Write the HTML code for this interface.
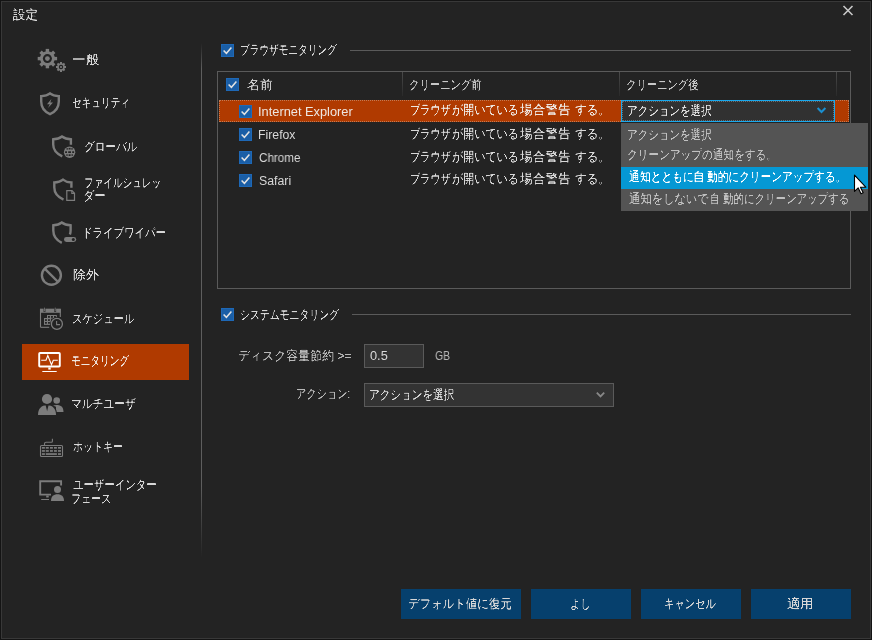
<!DOCTYPE html>
<html><head><meta charset="utf-8">
<style>
html,body{margin:0;padding:0;}
body{width:872px;height:640px;overflow:hidden;background:#141414;position:relative;font-family:"Liberation Sans",sans-serif;color:#d8d8d8;font-size:12px;}
.win{position:absolute;left:1px;top:1px;width:868px;height:636px;background:#232323;border:1px solid #383838;}
.t{position:absolute;white-space:nowrap;line-height:14px;transform-origin:0 0;will-change:transform;filter:url(#crisp);}
.ic{position:absolute;overflow:visible;}
.cb{position:absolute;width:13px;height:13px;}
.hl{position:absolute;height:1px;background:#5a5a5a;}
.btn{position:absolute;height:30px;background:#06406d;}
</style></head><body>
<svg width="0" height="0" style="position:absolute"><filter id="crisp"><feComponentTransfer><feFuncA type="linear" slope="2.5" intercept="-0.6"/></feComponentTransfer></filter></svg>
<div class="win"></div>

<!-- close X -->
<svg class="ic" style="left:842px;top:5px" width="12" height="11" viewBox="0 0 12 11"><path d="M1.5 1L10.5 10M10.5 1L1.5 10" stroke="#c8c8c8" stroke-width="1.6"/></svg>

<!-- sidebar icons -->
<svg class="ic" style="left:35px;top:45px" width="35" height="30" viewBox="0 0 35 30">
 <g fill="#7c7c7c">
  <g transform="translate(12.4 13.6)">
   <circle r="7.4"/>
   <rect x="-1.7" y="-9.7" width="3.4" height="19.4"/>
   <rect x="-1.7" y="-9.7" width="3.4" height="19.4" transform="rotate(45)"/>
   <rect x="-1.7" y="-9.7" width="3.4" height="19.4" transform="rotate(90)"/>
   <rect x="-1.7" y="-9.7" width="3.4" height="19.4" transform="rotate(135)"/>
  </g>
  <g transform="translate(26 22)">
   <circle r="3.8"/>
   <rect x="-1" y="-5" width="2" height="10"/>
   <rect x="-1" y="-5" width="2" height="10" transform="rotate(45)"/>
   <rect x="-1" y="-5" width="2" height="10" transform="rotate(90)"/>
   <rect x="-1" y="-5" width="2" height="10" transform="rotate(135)"/>
  </g>
 </g>
 <circle cx="12.4" cy="13.6" r="4.5" fill="#232323"/>
 <circle cx="12.4" cy="13.6" r="2.4" fill="#7c7c7c"/>
 <circle cx="26" cy="22" r="2.2" fill="#232323"/>
 <circle cx="26" cy="22" r="1.1" fill="#7c7c7c"/>
</svg>

<svg class="ic" style="left:35px;top:88px" width="30" height="30" viewBox="0 0 30 30">
 <path d="M15 5.3C12.6 7.3 9.2 8 6.2 8.1L6.2 13.5C6.2 19.5 9.6 23.8 15 26.1C20.4 23.8 23.8 19.5 23.8 13.5L23.8 8.1C20.8 8 17.4 7.3 15 5.3Z" fill="none" stroke="#7c7c7c" stroke-width="2.4" stroke-linejoin="miter"/>
 <path d="M16.4 11L12 16.2L14.8 16.2L13 20L18 14.6L15.3 14.6Z" fill="#7c7c7c"/>
</svg>

<svg class="ic" style="left:48px;top:132px" width="30" height="30" viewBox="0 0 30 30">
 <path d="M14.3 24.3C9.2 22 5.2 18.2 5.2 12.5L5.2 7.3C8.2 7.2 11.8 6.3 14 4.5C16.3 6.3 19.8 7.2 22.9 7.3L22.9 12.7" fill="none" stroke="#7c7c7c" stroke-width="2.4"/>
 <circle cx="21.6" cy="20.2" r="5.7" fill="#7c7c7c"/>
 <g fill="#232323">
  <rect x="18.5" y="16.2" width="1.4" height="1.4"/><rect x="20.6" y="15.9" width="2" height="1.6"/><rect x="23.3" y="16.2" width="1.4" height="1.4"/>
  <rect x="17.1" y="19.3" width="1.9" height="1.7"/><rect x="20.2" y="19.3" width="2.8" height="1.7"/><rect x="24.2" y="19.3" width="1.9" height="1.7"/>
  <rect x="18.3" y="22.3" width="1.4" height="1.5"/><rect x="20.6" y="22.3" width="2" height="1.7"/><rect x="23.5" y="22.3" width="1.4" height="1.5"/>
 </g>
</svg>

<svg class="ic" style="left:48px;top:175px" width="30" height="30" viewBox="0 0 30 30">
 <path d="M15.5 24.6C10.2 22.3 6.3 18.5 6.3 12.6L6.3 7.5C9.3 7.4 12.8 6.5 15 4.6C17.3 6.5 20.8 7.4 23.4 7.5L23.4 12.8" fill="none" stroke="#7c7c7c" stroke-width="2.4"/>
 <path d="M18.8 15.7L24 15.7L26.5 18.3L26.5 25.3L18.8 25.3Z" fill="none" stroke="#7c7c7c" stroke-width="1.2"/>
 <path d="M23.8 15.6L23.8 18.4L26.6 18.4" fill="none" stroke="#7c7c7c" stroke-width="1.1"/>
</svg>

<svg class="ic" style="left:48px;top:218px" width="30" height="30" viewBox="0 0 30 30">
 <path d="M13.8 24.8C8.8 22.4 5.3 18.5 5.3 12.5L5.3 7.3C8.3 7.2 11.6 6.3 13.8 4.5C16 6.3 19.4 7.2 22.6 7.3L22.6 12.6C22.6 13.8 22.4 15.2 21.9 16.5" fill="none" stroke="#7c7c7c" stroke-width="2.4"/>
 <rect x="16" y="19" width="12.2" height="4.9" rx="2.45" fill="#7c7c7c"/>
 <circle cx="25.3" cy="21.5" r="1.5" fill="#232323"/>
</svg>

<svg class="ic" style="left:36px;top:259px" width="32" height="32" viewBox="0 0 32 32">
 <circle cx="15.4" cy="16.3" r="9.5" fill="none" stroke="#7c7c7c" stroke-width="2.4"/>
 <path d="M8.7 9.6L22.1 23" stroke="#7c7c7c" stroke-width="2.4"/>
</svg>

<svg class="ic" style="left:36px;top:303px" width="30" height="30" viewBox="0 0 30 30">
 <path d="M4.5 24.3L4.5 6.4L24.3 6.4L24.3 14" fill="none" stroke="#7c7c7c" stroke-width="1.1"/>
 <path d="M4.5 24.3L13.2 24.3" fill="none" stroke="#7c7c7c" stroke-width="1.1"/>
 <rect x="4" y="5.9" width="20.8" height="3.9" fill="#7c7c7c"/>
 <rect x="7.6" y="4.6" width="1.8" height="4.4" fill="#232323"/>
 <rect x="18.3" y="4.6" width="1.8" height="4.4" fill="#232323"/>
 <rect x="8.1" y="4.6" width="0.8" height="3.8" fill="#7c7c7c"/>
 <rect x="18.8" y="4.6" width="0.8" height="3.8" fill="#7c7c7c"/>
 <rect x="11" y="12" width="9.8" height="3.6" fill="#7c7c7c"/>
 <rect x="8" y="15" width="7" height="6.9" fill="#7c7c7c"/>
 <g fill="#232323">
  <rect x="12" y="13" width="1.9" height="1.8"/><rect x="15" y="13" width="1.9" height="1.8"/><rect x="18" y="13" width="1.9" height="1.8"/>
  <rect x="9" y="16.2" width="1.9" height="1.7"/><rect x="12" y="16.2" width="1.9" height="1.7"/>
  <rect x="9" y="19" width="1.9" height="1.7"/><rect x="12" y="19" width="1.9" height="1.7"/>
 </g>
 <circle cx="20.9" cy="20.9" r="6.9" fill="#232323"/>
 <circle cx="20.9" cy="20.9" r="5.5" fill="none" stroke="#7c7c7c" stroke-width="1.3"/>
 <path d="M20.6 18.1L20.6 21.6L24 21.6" fill="none" stroke="#7c7c7c" stroke-width="1.1"/>
</svg>

<!-- selected item -->
<div style="position:absolute;left:22px;top:344px;width:167px;height:36px;background:#b03a00"></div>
<svg class="ic" style="left:34px;top:347px" width="32" height="32" viewBox="0 0 32 32">
 <rect x="5.2" y="6" width="20.6" height="13.5" rx="0.8" fill="none" stroke="#fff" stroke-width="1.9"/>
 <path d="M7.2 13.3L12 13.3L13.8 8.6L17.5 17.7L19.3 13.3L23.8 13.3" fill="none" stroke="#fff" stroke-width="1.1"/>
 <rect x="14.3" y="20.4" width="2.4" height="2.2" fill="#fff"/>
 <rect x="8.3" y="24" width="14.4" height="1" fill="#fff"/>
</svg>

<svg class="ic" style="left:34px;top:389px" width="32" height="32" viewBox="0 0 32 32">
 <circle cx="22.7" cy="11.5" r="3.3" fill="#7c7c7c"/>
 <path d="M19 16.4C21.5 15.6 25 15.6 27.3 17.3C28.8 18.4 29.5 20.6 29.5 23L22 23L22 17.8Z" fill="#7c7c7c"/>
 <circle cx="13" cy="10" r="6" fill="#232323"/>
 <circle cx="13" cy="10" r="5.1" fill="#7c7c7c"/>
 <path d="M2.8 27C2.8 18.5 7 15.3 13 15.3C19 15.3 23.2 18.5 23.2 27Z" fill="#232323"/>
 <path d="M4 26C4 19.3 7.5 16.2 13 16.2C18.5 16.2 22 19.3 22 26Z" fill="#7c7c7c"/>
 <path d="M11.6 16L14.6 16L13.1 22.2Z" fill="#232323"/>
 
</svg>

<svg class="ic" style="left:36px;top:433px" width="30" height="30" viewBox="0 0 30 30">
 <rect x="4.5" y="12.5" width="22" height="11" rx="1" fill="none" stroke="#7c7c7c" stroke-width="1.1"/>
 <path d="M8.5 12.5L8.5 10.8C8.5 9.9 9.1 9.2 10 9.2L15.4 9.2C16 9.2 16.4 8.8 16.4 8.2L16.4 5.8" fill="none" stroke="#7c7c7c" stroke-width="1.1"/>
 <g fill="#7c7c7c">
  <rect x="5.9" y="14" width="3" height="1.7"/><rect x="9.8" y="14" width="3" height="1.7"/><rect x="14" y="14" width="2.9" height="1.7"/><rect x="18" y="14" width="2.9" height="1.7"/><rect x="22" y="14" width="3" height="1.7"/>
  <rect x="5.9" y="17.1" width="3" height="1.7"/><rect x="9.8" y="17.1" width="3" height="1.7"/><rect x="14" y="17.1" width="2.9" height="1.7"/><rect x="18" y="17.1" width="2.9" height="1.7"/><rect x="22" y="17.1" width="3" height="1.7"/>
  <rect x="5.9" y="20.2" width="3" height="1.7"/><rect x="9.8" y="20.2" width="11.1" height="1.7"/><rect x="22" y="20.2" width="3" height="1.7"/>
 </g>
</svg>

<svg class="ic" style="left:35px;top:475px" width="32" height="32" viewBox="0 0 32 32">
 <path d="M16 19.6L5.2 19.6L5.2 6.2L26.1 6.2L26.1 10.5" fill="none" stroke="#7c7c7c" stroke-width="1.9"/>
 <rect x="11.2" y="20.5" width="2.5" height="2" fill="#7c7c7c"/>
 <rect x="6.2" y="24" width="7.8" height="1" fill="#7c7c7c"/>
 <circle cx="22.5" cy="14.5" r="3.5" fill="#7c7c7c"/>
 <path d="M16 26C16 21.3 18.6 19.3 22.5 19.3C26.4 19.3 29 21.3 29 26Z" fill="#7c7c7c"/>
</svg>

<!-- divider -->
<div style="position:absolute;left:201px;top:43px;width:1px;height:515px;background:linear-gradient(#232323,#5e5e5e 5%,#5e5e5e 86%,#232323)"></div>

<!-- browser monitoring group -->
<svg class="cb" style="left:221px;top:44px" width="13" height="13" viewBox="0 0 13 13"><rect x="0" y="0" width="13" height="13" fill="#1a5ea6"/><rect x="0.5" y="0.5" width="12" height="12" fill="none" stroke="#1e68b6" stroke-width="1"/><path d="M2.6 6.4L5.4 9.3L10.4 3.4" fill="none" stroke="#e2e2e2" stroke-width="1.5"/></svg>
<div class="hl" style="left:350px;top:50px;width:501px;"></div>

<!-- table -->
<div style="position:absolute;left:217px;top:71px;width:632px;height:216px;border:1px solid #5a5a5a;"></div>
<svg class="cb" style="left:226px;top:78px" width="13" height="13" viewBox="0 0 13 13"><rect x="0" y="0" width="13" height="13" fill="#1a5ea6"/><rect x="0.5" y="0.5" width="12" height="12" fill="none" stroke="#1e68b6" stroke-width="1"/><path d="M2.6 6.4L5.4 9.3L10.4 3.4" fill="none" stroke="#e2e2e2" stroke-width="1.5"/></svg>
<div style="position:absolute;left:402px;top:72px;width:1px;height:24px;background:linear-gradient(#4a4a4a,#2a2a2a)"></div>
<div style="position:absolute;left:619px;top:72px;width:1px;height:24px;background:linear-gradient(#4a4a4a,#2a2a2a)"></div>
<div style="position:absolute;left:836px;top:72px;width:1px;height:24px;background:linear-gradient(#4a4a4a,#2a2a2a)"></div>

<div style="position:absolute;left:219px;top:100px;width:630px;height:22px;background:#b03a00"></div>
<div style="position:absolute;left:219px;top:100px;width:628px;height:20px;border:1px dotted #c47a52"></div>
<svg class="cb" style="left:239px;top:105px" width="13" height="13" viewBox="0 0 13 13"><rect x="0" y="0" width="13" height="13" fill="#1a5ea6"/><rect x="0.5" y="0.5" width="12" height="12" fill="none" stroke="#1e68b6" stroke-width="1"/><path d="M2.6 6.4L5.4 9.3L10.4 3.4" fill="none" stroke="#e2e2e2" stroke-width="1.5"/></svg>
<svg class="cb" style="left:239px;top:128px" width="13" height="13" viewBox="0 0 13 13"><rect x="0" y="0" width="13" height="13" fill="#1a5ea6"/><rect x="0.5" y="0.5" width="12" height="12" fill="none" stroke="#1e68b6" stroke-width="1"/><path d="M2.6 6.4L5.4 9.3L10.4 3.4" fill="none" stroke="#e2e2e2" stroke-width="1.5"/></svg>
<svg class="cb" style="left:239px;top:151px" width="13" height="13" viewBox="0 0 13 13"><rect x="0" y="0" width="13" height="13" fill="#1a5ea6"/><rect x="0.5" y="0.5" width="12" height="12" fill="none" stroke="#1e68b6" stroke-width="1"/><path d="M2.6 6.4L5.4 9.3L10.4 3.4" fill="none" stroke="#e2e2e2" stroke-width="1.5"/></svg>
<svg class="cb" style="left:239px;top:174px" width="13" height="13" viewBox="0 0 13 13"><rect x="0" y="0" width="13" height="13" fill="#1a5ea6"/><rect x="0.5" y="0.5" width="12" height="12" fill="none" stroke="#1e68b6" stroke-width="1"/><path d="M2.6 6.4L5.4 9.3L10.4 3.4" fill="none" stroke="#e2e2e2" stroke-width="1.5"/></svg>

<!-- combo in row -->
<div style="position:absolute;left:621px;top:100px;width:212px;height:20px;background:#313131;border:1px solid #19a9ee"></div>
<div style="position:absolute;left:622px;top:101px;width:210px;height:18px;border:1px dotted #6c6c6c"></div>
<svg class="ic" style="left:816px;top:106px" width="12" height="9" viewBox="0 0 12 9"><path d="M1.6 2L5.5 6L9.4 2" fill="none" stroke="#1a8fd0" stroke-width="2"/></svg>

<!-- dropdown -->
<div style="position:absolute;left:621px;top:123px;width:247px;height:88px;background:#545454"></div>
<div style="position:absolute;left:621px;top:167px;width:247px;height:22px;background:#0598d4"></div>

<!-- system monitoring -->
<svg class="cb" style="left:221px;top:308px" width="13" height="13" viewBox="0 0 13 13"><rect x="0" y="0" width="13" height="13" fill="#1a5ea6"/><rect x="0.5" y="0.5" width="12" height="12" fill="none" stroke="#1e68b6" stroke-width="1"/><path d="M2.6 6.4L5.4 9.3L10.4 3.4" fill="none" stroke="#e2e2e2" stroke-width="1.5"/></svg>
<div class="hl" style="left:352px;top:314px;width:499px;"></div>

<div style="position:absolute;left:364px;top:344px;width:58px;height:22px;background:#333;border:1px solid #5a5a5a"></div>
<div style="position:absolute;left:364px;top:383px;width:248px;height:22px;background:#333;border:1px solid #5a5a5a"></div>
<svg class="ic" style="left:595px;top:390px" width="12" height="10" viewBox="0 0 12 10"><path d="M1.8 2.6L5.5 6.4L9.2 2.6" fill="none" stroke="#888" stroke-width="1.8"/></svg>

<!-- buttons -->
<div class="btn" style="left:401px;top:589px;width:120px;"></div>
<div class="btn" style="left:531px;top:589px;width:100px;"></div>
<div class="btn" style="left:641px;top:589px;width:100px;"></div>
<div class="btn" style="left:751px;top:589px;width:100px;"></div>

<div class="t" style="left:13.00px;top:8px;font-size:13px;color:#d8d8d8;transform:scaleX(0.9600);">設定</div>
<div class="t" style="left:71.96px;top:53px;font-size:13px;color:#d8d8d8;transform:scaleX(1.0433);">一般</div>
<div class="t" style="left:72.26px;top:96px;font-size:13px;color:#d8d8d8;transform:scaleX(0.7432);">セキュリティ</div>
<div class="t" style="left:84.18px;top:140px;font-size:13px;color:#d8d8d8;transform:scaleX(0.8204);">グローバル</div>
<div class="t" style="left:84.26px;top:176px;font-size:13px;color:#d8d8d8;transform:scaleX(0.7426);">ファイルシュレッ</div>
<div class="t" style="left:83.26px;top:189px;font-size:13px;color:#d8d8d8;transform:scaleX(0.8696);">ダー</div>
<div class="t" style="left:81.77px;top:226px;font-size:13px;color:#d8d8d8;transform:scaleX(0.8081);">ドライブワイパー</div>
<div class="t" style="left:72.51px;top:268px;font-size:13px;color:#d8d8d8;transform:scaleX(0.9811);">除外</div>
<div class="t" style="left:71.70px;top:312px;font-size:13px;color:#d8d8d8;transform:scaleX(0.7988);">スケジュール</div>
<div class="t" style="left:71.15px;top:354px;font-size:13px;color:#f0e6e0;transform:scaleX(0.7442);">モニタリング</div>
<div class="t" style="left:71.27px;top:397px;font-size:13px;color:#d8d8d8;transform:scaleX(0.8299);">マルチユーザ</div>
<div class="t" style="left:73.32px;top:440px;font-size:13px;color:#d8d8d8;transform:scaleX(0.7686);">ホットキー</div>
<div class="t" style="left:73.10px;top:478px;font-size:13px;color:#d8d8d8;transform:scaleX(0.8049);">ユーザーインター</div>
<div class="t" style="left:71.32px;top:492px;font-size:13px;color:#d8d8d8;transform:scaleX(0.7716);">フェース</div>
<div class="t" style="left:240.26px;top:43px;font-size:13px;color:#d8d8d8;transform:scaleX(0.7442);">ブラウザモニタリング</div>
<div class="t" style="left:247.00px;top:78px;font-size:13px;color:#c8c8c8;">名前</div>
<div class="t" style="left:409.20px;top:78px;font-size:13px;color:#c8c8c8;transform:scaleX(0.7978);">クリーニング前</div>
<div class="t" style="left:626.20px;top:78px;font-size:13px;color:#c8c8c8;transform:scaleX(0.7967);">クリーニング後</div>
<div class="t" style="left:257.93px;top:105px;font-size:12px;color:#eee6e0;filter:none;transform:scaleX(1.0682);">Internet Explorer</div>
<div class="t" style="left:258.19px;top:128px;font-size:12px;color:#d8d8d8;filter:none;transform:scaleX(1.0224);">Firefox</div>
<div class="t" style="left:259.20px;top:151px;font-size:12px;color:#d8d8d8;filter:none;transform:scaleX(0.9717);">Chrome</div>
<div class="t" style="left:259.16px;top:174px;font-size:12px;color:#d8d8d8;filter:none;transform:scaleX(1.0272);">Safari</div>
<div class="t" style="left:627.19px;top:104px;font-size:13px;color:#e0e0e0;transform:scaleX(0.8137);">アクションを選択</div>
<div class="t" style="left:627.19px;top:128px;font-size:13px;color:#c0c0c0;transform:scaleX(0.8137);">アクションを選択</div>
<div class="t" style="left:240.24px;top:308px;font-size:13px;color:#d8d8d8;transform:scaleX(0.7613);">システムモニタリング</div>
<div class="t" style="left:238.07px;top:349px;font-size:13px;color:#b8b8b8;transform:scaleX(0.9256);">ディスク容量節約 &gt;=</div>
<div class="t" style="left:370.16px;top:349px;font-size:12px;color:#d8d8d8;filter:none;transform:scaleX(1.0662);">0.5</div>
<div class="t" style="left:434.61px;top:349px;font-size:12px;color:#b8b8b8;filter:none;transform:scaleX(0.8717);">GB</div>
<div class="t" style="left:296.41px;top:387px;font-size:13px;color:#b8b8b8;transform:scaleX(0.7896);">アクション:</div>
<div class="t" style="left:369.38px;top:388px;font-size:13px;color:#d8d8d8;transform:scaleX(0.8206);">アクションを選択</div>
<div class="t" style="left:408.01px;top:597px;font-size:13px;color:#d8d8d8;transform:scaleX(0.8878);">デフォルト値に復元</div>
<div class="t" style="left:569.99px;top:597px;font-size:13px;color:#d8d8d8;transform:scaleX(0.7920);">よし</div>
<div class="t" style="left:664.20px;top:597px;font-size:13px;color:#d8d8d8;transform:scaleX(0.7969);">キャンセル</div>
<div class="t" style="left:787.40px;top:597px;font-size:13px;color:#d8d8d8;transform:scaleX(1.0242);">適用</div>
<div class="t" style="left:410.22px;top:103px;font-size:13px;color:#eee6e0;transform:scaleX(0.7825);">ブラウザ</div>
<div class="t" style="left:452.00px;top:103px;font-size:13px;color:#eee6e0;transform:scaleX(0.8553);">が開いている</div>
<div class="t" style="left:520.00px;top:103px;font-size:13px;color:#eee6e0;transform:scaleX(0.9767);">場合警告</div>
<div class="t" style="left:575.00px;top:103px;font-size:13px;color:#eee6e0;transform:scaleX(0.8937);">する。</div>
<div class="t" style="left:410.22px;top:127px;font-size:13px;color:#d8d8d8;transform:scaleX(0.7825);">ブラウザ</div>
<div class="t" style="left:452.00px;top:127px;font-size:13px;color:#d8d8d8;transform:scaleX(0.8553);">が開いている</div>
<div class="t" style="left:520.00px;top:127px;font-size:13px;color:#d8d8d8;transform:scaleX(0.9767);">場合警告</div>
<div class="t" style="left:575.00px;top:127px;font-size:13px;color:#d8d8d8;transform:scaleX(0.8937);">する。</div>
<div class="t" style="left:410.22px;top:150px;font-size:13px;color:#d8d8d8;transform:scaleX(0.7825);">ブラウザ</div>
<div class="t" style="left:452.00px;top:150px;font-size:13px;color:#d8d8d8;transform:scaleX(0.8553);">が開いている</div>
<div class="t" style="left:520.00px;top:150px;font-size:13px;color:#d8d8d8;transform:scaleX(0.9767);">場合警告</div>
<div class="t" style="left:575.00px;top:150px;font-size:13px;color:#d8d8d8;transform:scaleX(0.8937);">する。</div>
<div class="t" style="left:410.22px;top:172px;font-size:13px;color:#d8d8d8;transform:scaleX(0.7825);">ブラウザ</div>
<div class="t" style="left:452.00px;top:172px;font-size:13px;color:#d8d8d8;transform:scaleX(0.8553);">が開いている</div>
<div class="t" style="left:520.00px;top:172px;font-size:13px;color:#d8d8d8;transform:scaleX(0.9767);">場合警告</div>
<div class="t" style="left:575.00px;top:172px;font-size:13px;color:#d8d8d8;transform:scaleX(0.8937);">する。</div>
<div class="t" style="left:626.78px;top:148px;font-size:13px;color:#c0c0c0;transform:scaleX(0.8233);">クリーンアップの通知をする。</div>
<div class="t" style="left:628.60px;top:170px;font-size:13px;color:#ffffff;transform:scaleX(0.8299);">通知とともに</div>
<div class="t" style="left:692.75px;top:170px;font-size:13px;color:#ffffff;transform:scaleX(0.8824);">自</div>
<div class="t" style="left:706.80px;top:170px;font-size:13px;color:#ffffff;transform:scaleX(0.8238);">動的にクリーンアップする。</div>
<div class="t" style="left:628.60px;top:192px;font-size:13px;color:#c0c0c0;transform:scaleX(0.8725);">通知をしないで</div>
<div class="t" style="left:709.85px;top:192px;font-size:13px;color:#c0c0c0;transform:scaleX(0.7324);">自</div>
<div class="t" style="left:722.50px;top:192px;font-size:13px;color:#c0c0c0;transform:scaleX(0.8085);">動的にクリーンアップする</div>

<!-- cursor -->
<svg class="ic" style="left:853px;top:174px" width="15" height="22" viewBox="0 0 15 22"><path d="M1.5 1.2L1.5 17.4L5.2 13.9L8 19.8L10.2 18.8L7.5 13.2L12.8 13.2Z" fill="#fff" stroke="#000" stroke-width="1.1" stroke-linejoin="round"/></svg>
</body></html>
